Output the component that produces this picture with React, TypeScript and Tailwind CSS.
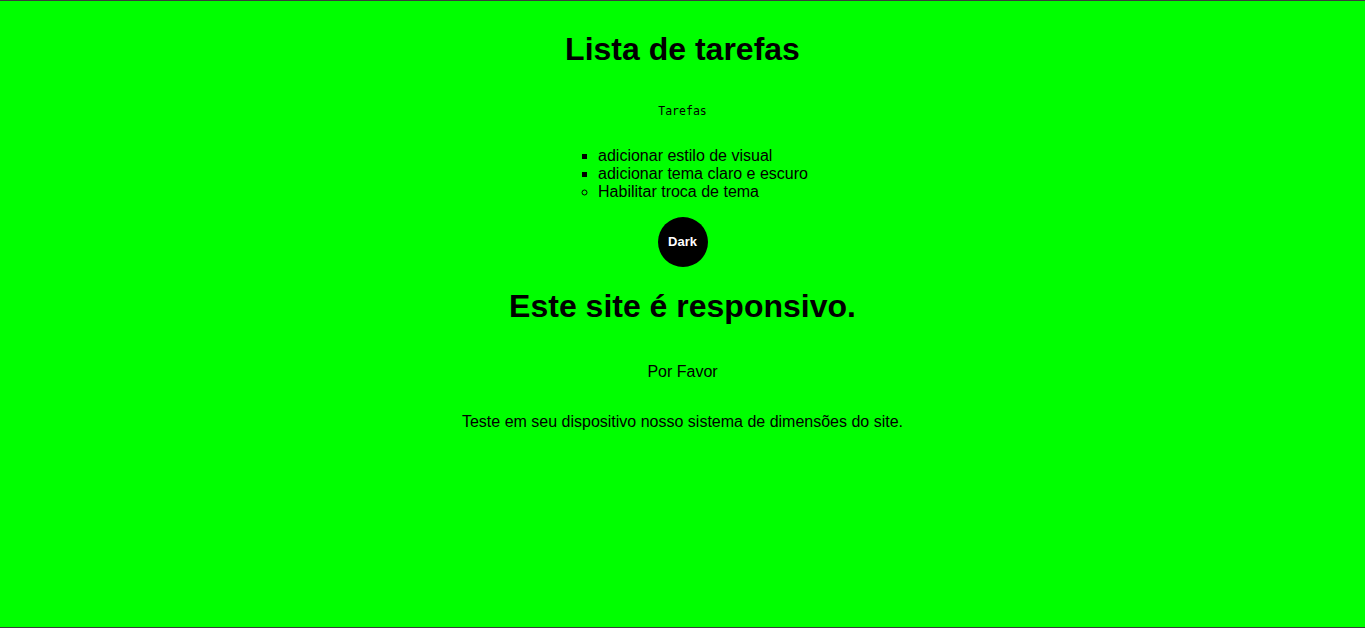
export default function App() {
  return (
    <div className="flex min-h-screen flex-col items-center border-t border-b border-t-[#3c3c3c] border-b-[#3c3c3c] bg-[#00ff00] text-center text-black font-['Liberation_Sans',Arial,sans-serif]">
      <h1 className="mt-[30px] text-[32px] font-bold leading-[37px]">Lista de tarefas</h1>

      <p className="mt-[37px] font-['DejaVu_Sans_Mono',monospace] text-[11.5px] leading-[13px]">Tarefas</p>

      <ul className="mt-[29px] inline-block pl-[41px] text-left text-[16px] leading-[18px]">
        <li className="list-[square]">adicionar estilo de visual</li>
        <li className="list-[square]">adicionar tema claro e escuro</li>
        <li className="list-[circle]">Habilitar troca de tema</li>
      </ul>

      <button className="mt-[16px] flex h-[50px] w-[50px] items-center justify-center rounded-full bg-black text-[13px] font-semibold text-white">
        Dark
      </button>

      <h2 className="mt-[21px] text-[32px] font-bold leading-[37px]">Este site é responsivo.</h2>

      <p className="mt-[38px] text-[16px] leading-[18px]">Por Favor</p>

      <p className="mt-[32px] text-[16px] leading-[18px]">
        Teste em seu dispositivo nosso sistema de dimensões do site.
      </p>
    </div>
  );
}
